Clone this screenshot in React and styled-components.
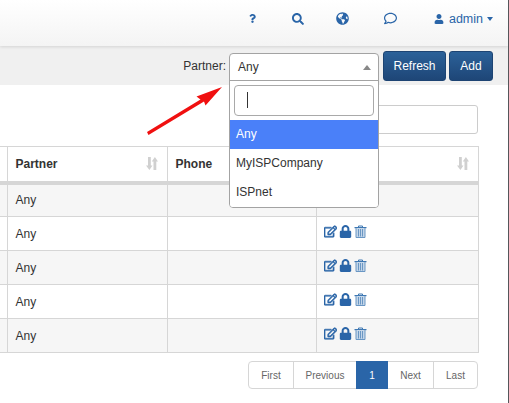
import React from "react";
import styled, { createGlobalStyle } from "styled-components";
import { FaQuestion, FaSearch, FaGlobeAmericas, FaRegComment, FaUser, FaRegEdit, FaLock } from "react-icons/fa";

const Global = createGlobalStyle`
  html, body { margin: 0; padding: 0; background: #fff; }
  body { font-family: "Liberation Sans", Arial, sans-serif; font-size: 12px; color: #333; }
`;

const Shell = styled.div`
  position: relative;
  width: 508px;
  height: 403px;
  overflow: hidden;
  background: #fff;
  border-right: 1px solid #55565a;
`;

const Header = styled.header`
  height: 46px;
  display: flex;
  align-items: center;
  justify-content: flex-end;
  padding: 0 15px 9px 0;
  box-sizing: border-box;
  background: linear-gradient(#ffffff, #f4f4f4);
  box-shadow: 0 1px 3px rgba(0, 0, 0, 0.12);
  position: relative;
  color: #2a65a8;
`;

const NavItem = styled.div`
  width: ${(p) => p.$w}px;
  display: flex;
  align-items: center;
  justify-content: ${(p) => (p.$end ? "flex-end" : "center")};
  gap: ${(p) => p.$gap || 0}px;
  font-size: 12.500px;
`;

const Caret = styled.span`
  width: 0;
  height: 0;
  margin-left: -1px;
  border-left: 3.500px solid transparent;
  border-right: 3.500px solid transparent;
  border-top: 4px solid #2a65a8;
`;

const Toolbar = styled.div`
  height: 39px;
  display: flex;
  align-items: center;
  justify-content: flex-end;
  padding-right: 15px;
  background: #f0f0f0;
`;

const Label = styled.span`
  margin-right: 3px;
  font-size: 12px;
  color: #333;
`;

const SelectWrap = styled.div`
  position: relative;
  width: 150px;
  height: 27px;
  margin-right: 4px;
  margin-top: 1px;
`;

const Panel = styled.div`
  position: absolute;
  z-index: 5;
  top: 0;
  left: 0;
  width: 150px;
  height: 155px;
  box-sizing: border-box;
  background: #fff;
  border: 1px solid #a3a3a3;
  border-radius: 4px;
  overflow: hidden;
`;

const SelectHead = styled.div`
  height: 27px;
  box-sizing: border-box;
  display: flex;
  align-items: center;
  justify-content: space-between;
  padding: 1px 7px 0 8px;
  border-bottom: 1px solid #a3a3a3;
  font-size: 12px;
  color: #333;
`;

const SelectArrow = styled.span`
  width: 0;
  height: 0;
  border-left: 4px solid transparent;
  border-right: 4px solid transparent;
  border-bottom: 5px solid #888;
`;

const SearchBox = styled.div`
  height: 31px;
  margin: 4px;
  box-sizing: border-box;
  border: 1px solid #a9a9a9;
  border-radius: 4px;
  display: flex;
  align-items: center;
  padding-left: 12px;
`;

const TextCaret = styled.span`
  width: 1px;
  height: 16px;
  background: #333;
`;

const Option = styled.div`
  height: 29px;
  display: flex;
  align-items: center;
  padding-left: 6px;
  font-size: 12px;
  background: ${(p) => (p.$active ? "#4a80f9" : "#fff")};
  color: ${(p) => (p.$active ? "#fff" : "#333")};
`;

const Button = styled.button`
  height: 30px;
  width: ${(p) => p.$w}px;
  margin-left: ${(p) => p.$ml || 0}px;
  padding: 0;
  font: 12px "Liberation Sans", Arial, sans-serif;
  color: #fff;
  border: 1px solid #1d4473;
  border-radius: 3px;
  background: linear-gradient(#2b6199, #1e4677);
`;

const Content = styled.main`
  width: 478px;
  padding-top: 20px;
  display: flex;
  flex-direction: column;
`;

const SearchRow = styled.div`
  align-self: flex-end;
  width: 138px;
  height: 29px;
  box-sizing: border-box;
  border: 1px solid #ccc;
  border-radius: 3px;
  margin-bottom: 12px;
`;

const Table = styled.table`
  border-collapse: collapse;
  table-layout: fixed;
  width: 478px;
  font-size: 12px;
  color: #333;
`;

const Th = styled.th`
  height: 36px;
  padding: 0 9px 0 8px;
  text-align: left;
  font-weight: bold;
  border-top: 1px solid #d6d6d6;
  border-bottom: 4px solid #d6d6d6;
  border-right: 1px solid #d6d6d6;
  box-sizing: border-box;
`;

const SpacerTh = styled(Th)`
  padding: 0;
`;

const ThInner = styled.div`
  display: flex;
  align-items: center;
  justify-content: space-between;
`;

const Tr = styled.tr`
  background: ${(p) => (p.$odd ? "#f6f6f6" : "#fff")};
`;

const Td = styled.td`
  height: 34px;
  padding: 0 8px;
  box-sizing: border-box;
  border-bottom: 1px solid #d6d6d6;
  border-right: 1px solid #d6d6d6;
`;

const SpacerTd = styled(Td)`
  padding: 0;
`;

const Actions = styled.div`
  display: flex;
  align-items: center;
  gap: 2px;
  color: #2a65a8;
  margin: 0 0 4px -1px;
`;

const Pager = styled.nav`
  align-self: flex-end;
  display: flex;
  margin-top: 8px;
  height: 28px;
  box-sizing: border-box;
  border: 1px solid #d6d6d6;
  border-radius: 4px;
`;

const PageItem = styled.div`
  width: ${(p) => p.$w}px;
  display: flex;
  align-items: center;
  justify-content: center;
  font-size: 10px;
  color: ${(p) => (p.$active ? "#fff" : "#666")};
  background: ${(p) => (p.$active ? "#2a65a8" : "transparent")};
  margin: ${(p) => (p.$active ? "-1px 0" : "0")};
  border-right: ${(p) => (p.$last || p.$active || p.$noLine ? "none" : "1px solid #d6d6d6")};
  box-sizing: border-box;
`;

const ArrowLayer = styled.svg`
  position: absolute;
  left: 140px;
  top: 80px;
  z-index: 4;
`;

const SortIcon = () => (
  <svg width="12" height="13" viewBox="0 0 12 13" fill="#d0d0d0">
    <path d="M2 0h2.800v8.500H6.500L3.400 13 0 8.500h2zM5.800 4.500L8.900 0 12 4.500h-1.700V13H7.500V4.500z" />
  </svg>
);

const TrashIcon = () => (
  <svg width="13" height="13" viewBox="0 0 13 13">
    <path d="M0.500 2.600h12" stroke="#3f78b3" strokeWidth="1.200" fill="none" />
    <path d="M4.500 2.500V1h4v1.500" stroke="#3f78b3" strokeWidth="1" fill="none" />
    <path d="M2 3.200h9V12.500H2z" fill="#c3d5e8" />
    <path d="M2 3v9.500h9V3M4.500 4v7.500M6.500 4v7.500M8.500 4v7.500" stroke="#6a97c4" strokeWidth="1" fill="none" />
  </svg>
);

const RowActions = () => (
  <Actions>
    <FaRegEdit size={13} stroke="currentColor" strokeWidth={25} />
    <FaLock size={13} />
    <TrashIcon />
  </Actions>
);

export default function App() {
  return (
    <Shell>
      <Global />
      <Header>
        <NavItem $w={45}><FaQuestion size={9} /></NavItem>
        <NavItem $w={45}><FaSearch size={12} /></NavItem>
        <NavItem $w={45}><FaGlobeAmericas size={13} /></NavItem>
        <NavItem $w={50}><FaRegComment size={13} /></NavItem>
        <NavItem $w={78} $gap={5} $end><FaUser size={10} />admin<Caret /></NavItem>
      </Header>
      <Toolbar>
        <Label>Partner:</Label>
        <SelectWrap>
          <Panel>
            <SelectHead>Any<SelectArrow /></SelectHead>
            <SearchBox><TextCaret /></SearchBox>
            <Option $active>Any</Option>
            <Option>MyISPCompany</Option>
            <Option>ISPnet</Option>
          </Panel>
        </SelectWrap>
        <Button $w={63}>Refresh</Button>
        <Button $w={44} $ml={3}>Add</Button>
      </Toolbar>
      <ArrowLayer width="90" height="60" viewBox="0 0 90 60">
        <path d="M82 7L56.500 16.500L60.500 19.500L7 52L8.500 55L64 21.500L65.500 25.500Z" fill="#f01010" />
      </ArrowLayer>
      <Content>
        <SearchRow />
        <Table>
          <colgroup>
            <col width="7" />
            <col width="160" />
            <col width="149" />
            <col width="162" />
          </colgroup>
          <thead>
            <tr>
              <SpacerTh />
              <Th><ThInner>Partner<SortIcon /></ThInner></Th>
              <Th>Phone</Th>
              <Th><ThInner><span /><SortIcon /></ThInner></Th>
            </tr>
          </thead>
          <tbody>
            {[0, 1, 2, 3, 4].map((i) => (
              <Tr key={i} $odd={i % 2 === 0}>
                <SpacerTd />
                <Td>Any</Td>
                <Td />
                <Td>{i > 0 && <RowActions />}</Td>
              </Tr>
            ))}
          </tbody>
        </Table>
        <Pager>
          <PageItem $w={45}>First</PageItem>
          <PageItem $w={62} $noLine>Previous</PageItem>
          <PageItem $w={32} $active>1</PageItem>
          <PageItem $w={46}>Next</PageItem>
          <PageItem $w={43} $last>Last</PageItem>
        </Pager>
      </Content>
    </Shell>
  );
}
